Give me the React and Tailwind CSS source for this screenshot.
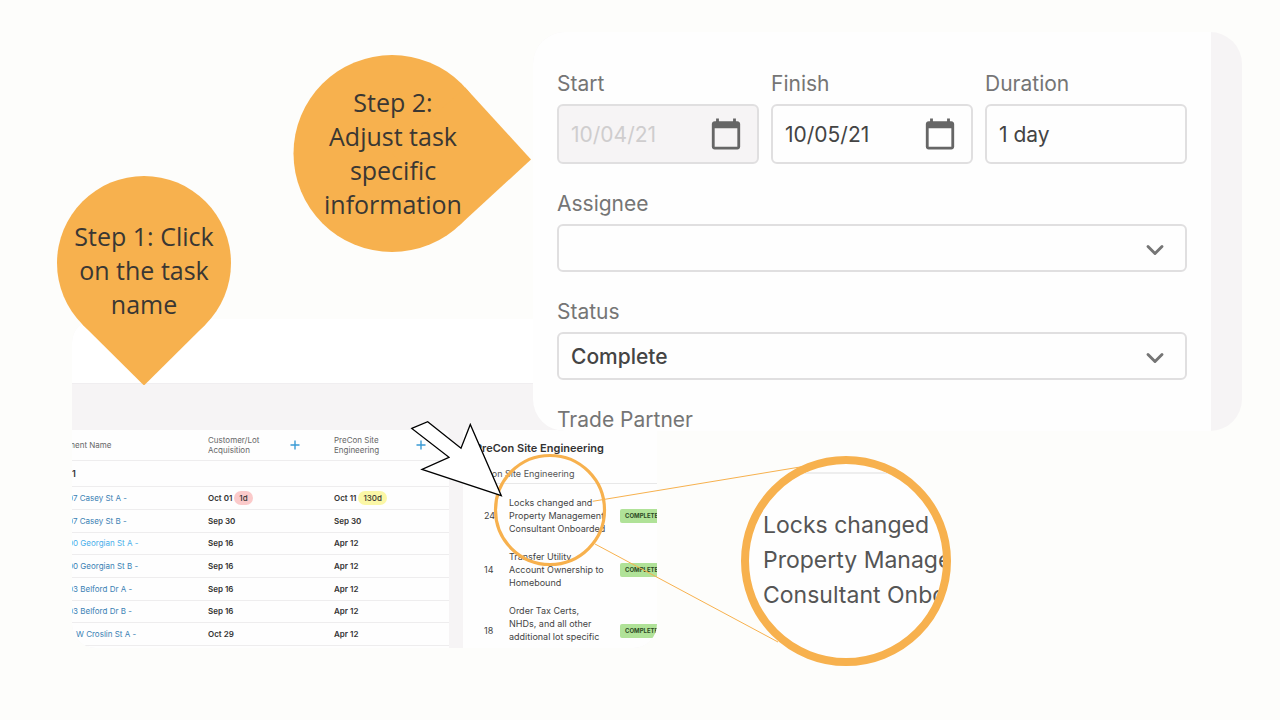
import { useState } from 'react';
import { MdCalendarToday } from 'react-icons/md';
import { ChevronDown } from 'lucide-react';

const ROWS = [
  { name: '07 Casey St A -', lot: 'Oct 01', lotTag: '1d', eng: 'Oct 11', engTag: '130d' },
  { name: '07 Casey St B -', lot: 'Sep 30', eng: 'Sep 30' },
  { name: '00 Georgian St A -', lot: 'Sep 16', eng: 'Apr 12', active: true },
  { name: '00 Georgian St B -', lot: 'Sep 16', eng: 'Apr 12' },
  { name: '03 Belford Dr A -', lot: 'Sep 16', eng: 'Apr 12' },
  { name: '03 Belford Dr B -', lot: 'Sep 16', eng: 'Apr 12' },
  { name: 'W Croslin St A -', lot: 'Oct 29', eng: 'Apr 12', indent: true },
];

const TASKS = [
  { days: 24, lines: ['Locks changed and', 'Property Management', 'Consultant Onboarded'] },
  { days: 14, lines: ['Transfer Utility', 'Account Ownership to', 'Homebound'] },
  { days: 18, lines: ['Order Tax Certs,', 'NHDs, and all other', 'additional lot specific'], tall: true },
];

function ColumnHead({ first, second }) {
  return (
    <th className="p-0 text-left font-normal align-middle">
      <div className="flex items-center">
        <span className="w-20 leading-[10px]">
          {first}
          <br />
          {second}
        </span>
        <button type="button" aria-label={`Add ${first} ${second}`} className="text-[#3a9bd5]">
          <svg viewBox="0 0 14 14" className="w-3.5 h-3.5" fill="none" stroke="currentColor" strokeWidth="1.4">
            <path d="M7 2.5v9M2.5 7h9" />
          </svg>
        </button>
      </div>
    </th>
  );
}

function ScheduleTable() {
  return (
    <table className="table-fixed border-collapse w-full h-[216px] text-[8px] text-[#333]">
      <colgroup>
        <col className="w-[140px]" />
        <col className="w-[126px]" />
        <col />
      </colgroup>
      <thead>
        <tr className="h-[30px] border-b border-[#eeedee] text-[#666]">
          <th className="p-0 text-left font-normal">ment Name</th>
          <ColumnHead first="Customer/Lot" second="Acquisition" />
          <ColumnHead first="PreCon Site" second="Engineering" />
        </tr>
      </thead>
      <tbody>
        <tr className="h-[26px] border-b border-[#eeedee]">
          <td colSpan={3} className="p-0 pl-1 font-semibold text-[9px]">1</td>
        </tr>
        {ROWS.map((r) => (
          <tr key={r.name} className="h-[22px] border-b border-[#eeedee]">
            <td className={r.indent ? 'p-0 pl-2' : 'p-0'}>
              <a href="#task" className={r.active ? 'text-[#49aeea]' : 'text-[#3a81b4]'}>{r.name}</a>
            </td>
            <td className="p-0 font-semibold">
              {r.lot}
              {r.lotTag && <span className="ml-0.5 px-[5px] py-[2px] rounded-full bg-[#fbcaca] font-medium">{r.lotTag}</span>}
            </td>
            <td className="p-0 font-semibold">
              {r.eng}
              {r.engTag && <span className="ml-0.5 px-[5px] py-[2px] rounded-full bg-[#fbf7a6] font-medium">{r.engTag}</span>}
            </td>
          </tr>
        ))}
      </tbody>
    </table>
  );
}

function TaskPanel() {
  return (
    <section className="flex-1 min-w-0 bg-[#fefefe] overflow-hidden">
      <h2 className="pl-3 pt-[11px] text-[11px] leading-[14px] font-semibold text-[#333] whitespace-nowrap">
        PreCon Site Engineering
      </h2>
      <p className="ml-2 pt-3 pb-[2px] text-[9px] leading-[14px] text-[#555] border-b border-[#e8e8e8] whitespace-nowrap">
        PreCon Site Engineering
      </p>
      <ul className="pt-3 space-y-[14px] text-[9px] text-[#444]">
        {TASKS.map((t) => (
          <li key={t.days} className={t.tall ? 'flex items-center h-[54px]' : 'flex items-center h-10'}>
            <span className="w-[46px] pl-[21px] shrink-0">{t.days}</span>
            <p className="w-[111px] h-full shrink-0 leading-[13px] whitespace-nowrap">
              {t.lines.map((l) => (
                <span key={l} className="block">{l}</span>
              ))}
            </p>
            <span className="shrink-0 w-14 pl-[5px] rounded-xs bg-[#b0e298] text-[6px] leading-[14px] font-bold text-[#2d4a25]">
              COMPLETE
            </span>
          </li>
        ))}
      </ul>
    </section>
  );
}

function Schedule() {
  return (
    <div className="absolute left-[72px] top-[319px] w-[585px] h-[329px] rounded-3xl overflow-hidden bg-[#f6f4f5]">
      <div className="h-[65px] bg-white border-b border-[#f0eef0]" />
      <div className="h-[46px]" />
      <div className="flex h-[218px] gap-[14px]">
        <div className="w-[377px] shrink-0 overflow-hidden rounded-tr-md bg-[#fefefe]">
          <div className="-ml-1">
            <ScheduleTable />
          </div>
        </div>
        <TaskPanel />
      </div>
    </div>
  );
}

function DateField({ id, label, value, disabled }) {
  return (
    <div className="flex-1 min-w-0">
      <label htmlFor={id} className="block mb-2 text-[21px] leading-6 text-[#757575]">{label}</label>
      <div
        className={`flex items-center h-[60px] pl-3 pr-[14px] rounded-md border-2 border-[#e0dfe0] ${
          disabled ? 'bg-[#f6f4f5] text-[#cfcdce]' : 'bg-[#fefefe] text-[#444]'
        }`}
      >
        <input
          id={id}
          type="text"
          defaultValue={value}
          disabled={disabled}
          className="flex-1 min-w-0 h-full text-[21px] bg-transparent outline-none"
        />
        <button type="button" aria-label={`Choose ${label}`} disabled={disabled} className="text-[#666]">
          <MdCalendarToday className="w-[34px] h-[34px]" />
        </button>
      </div>
    </div>
  );
}

function SelectField({ id, label, value, onChange, options }) {
  return (
    <div>
      <label htmlFor={id} className="block mb-2 text-[21px] leading-6 text-[#757575]">{label}</label>
      <div className="relative">
        <select
          id={id}
          value={value}
          onChange={(e) => onChange(e.target.value)}
          className="block appearance-none w-full h-12 px-3 pt-0.5 rounded-md border-2 border-[#e0dfe0] bg-[#fefefe] text-[21px] font-medium text-[#444] outline-none"
        >
          {options.map((o) => (
            <option key={o} value={o}>{o}</option>
          ))}
        </select>
        <ChevronDown strokeWidth={2.5} className="absolute right-[18px] top-3 w-7 h-7 text-[#757575] pointer-events-none" />
      </div>
    </div>
  );
}

function TaskForm() {
  const [assignee, setAssignee] = useState('');
  const [status, setStatus] = useState('Complete');

  return (
    <form className="absolute left-[533px] top-8 w-[709px] h-[399px] pr-[31px] rounded-[32px] overflow-hidden bg-[#f6f4f5]">
      <div className="h-full px-6 pt-10 space-y-7 bg-[#fefefe] overflow-hidden">
        <div className="flex gap-3">
          <DateField id="start" label="Start" value="10/04/21" disabled />
          <DateField id="finish" label="Finish" value="10/05/21" />
          <div className="flex-1 min-w-0">
            <label htmlFor="duration" className="block mb-2 text-[21px] leading-6 text-[#757575]">Duration</label>
            <input
              id="duration"
              type="text"
              defaultValue="1 day"
              className="block w-full h-[60px] px-3 rounded-md border-2 border-[#e0dfe0] bg-[#fefefe] text-[21px] text-[#444] outline-none"
            />
          </div>
        </div>
        <SelectField id="assignee" label="Assignee" value={assignee} onChange={setAssignee} options={['']} />
        <SelectField id="status" label="Status" value={status} onChange={setStatus} options={['Complete']} />
        <p className="text-[21px] leading-6 text-[#757575]">Trade Partner</p>
      </div>
    </form>
  );
}

function Pointer() {
  return (
    <svg className="absolute left-[410px] top-[420px] w-[400px] h-[230px] pointer-events-none" viewBox="410 420 400 230" fill="none">
      <circle cx="550" cy="510" r="54.5" stroke="#f7b14e" strokeWidth="3.2" />
      <path d="M592.7 501.3 802 466.7M595 544 778 642" stroke="#f7b14e" strokeWidth="1" />
      <path
        d="M411.8 428.4 427.7 421.7 461 448.3 470.3 424.5 501.3 495.7 422 469.3 449 457.3Z"
        fill="#fff"
        stroke="#000"
        strokeWidth="1.3"
      />
    </svg>
  );
}

function Lens() {
  return (
    <div className="absolute left-[741px] top-[456px] w-[210px] h-[210px] rounded-full border-8 border-[#f7b14e] bg-[#fefefe] overflow-hidden">
      <div className="h-[10px] border-b-2 border-[#eeeeee]" />
      <p className="pt-[34px] pl-[14px] text-[23px] leading-[35px] text-[#555] whitespace-nowrap">
        Locks changed
        <br />
        Property Management
        <br />
        Consultant Onboarded
      </p>
    </div>
  );
}

export default function App() {
  return (
    <main className="relative min-h-screen overflow-hidden bg-[#fdfdfb] font-['Inter',sans-serif]">
      <Schedule />
      <TaskForm />
      <Pointer />
      <Lens />

      <div className="absolute left-[57px] top-44 w-[174px] h-[209px]">
        <svg className="absolute inset-0 w-full h-full" viewBox="0 0 174 209" fill="#f7b14e">
          <circle cx="87" cy="87" r="87" />
          <path d="M25.5 148.5 87 209.5 148.5 148.5Z" />
        </svg>
        <p className="relative pt-[43px] text-center text-[25px] leading-[34px] text-[#3a3733] font-['Open_Sans',sans-serif]">
          Step 1: Click
          <br />
          on the task
          <br />
          name
        </p>
      </div>

      <div className="absolute left-[293px] top-[55px] w-[238px] h-[197px]">
        <svg className="absolute inset-0 w-full h-full" viewBox="0 0 238 197" fill="#f7b14e">
          <circle cx="99" cy="98.5" r="98.5" />
          <path d="M172.2 32.6 238 104.5 166.2 170.5 99 98.5Z" />
        </svg>
        <p className="relative w-[200px] pt-[30px] text-center text-[25px] leading-[34px] text-[#3a3733] font-['Open_Sans',sans-serif]">
          Step 2:
          <br />
          Adjust task
          <br />
          specific
          <br />
          information
        </p>
      </div>
    </main>
  );
}
